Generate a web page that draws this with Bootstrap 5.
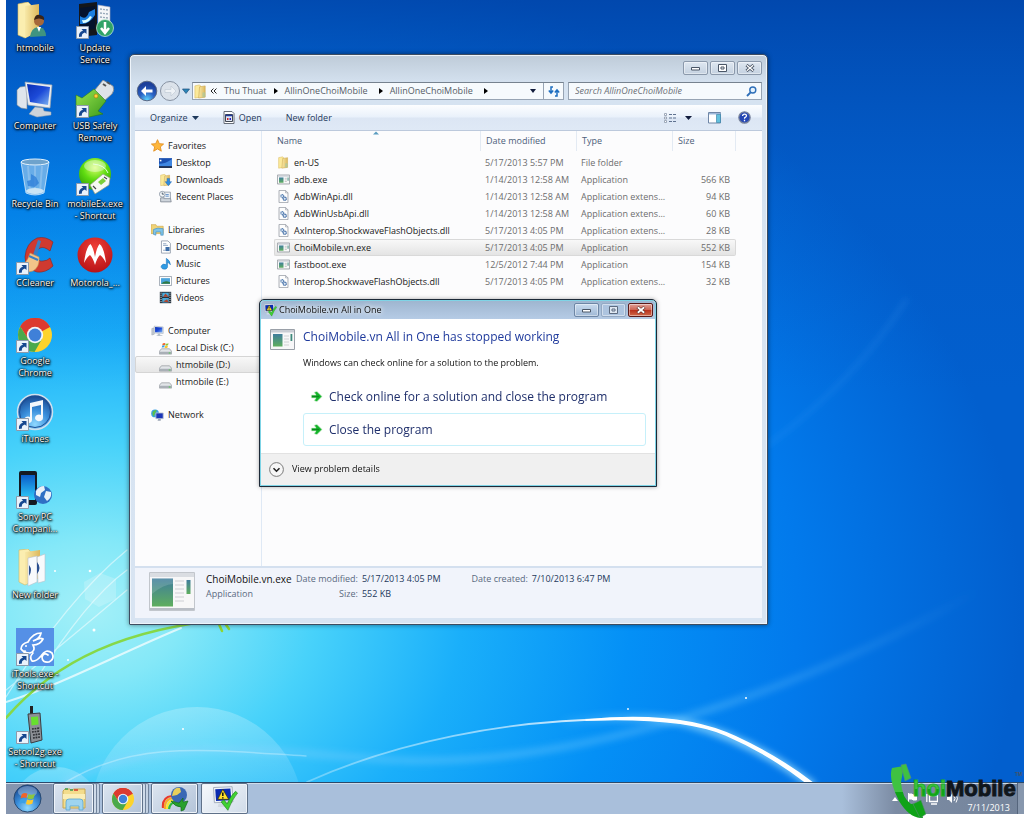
<!DOCTYPE html>
<html lang="en">
<head>
<meta charset="utf-8">
<meta name="viewport" content="width=device-width, initial-scale=1">
<title>Desktop</title>
<link href="https://cdn.jsdelivr.net/npm/bootstrap@5.3.0/dist/css/bootstrap.min.css" rel="stylesheet">
<style>
body{font:9px/12px "Open Sans",sans-serif;color:#1a1a1a;background:#fff;overflow:hidden}
button,input{font:inherit;color:inherit;border:0;background:none;padding:0}
a{color:inherit;text-decoration:none}
svg{display:block;flex:none}
.screen{padding:0 0 5px 6px}
.desk{min-height:0}
.wallpaper{position:absolute;inset:0;width:100%;height:100%}
.shortcuts{position:relative;display:grid;grid-auto-flow:column;grid-template-rows:repeat(10,1fr);grid-template-columns:60px 60px;width:120px;height:100%;margin-left:-1px}
.shortcut{display:flex;flex-direction:column;align-items:center;padding-top:2px;min-height:0;color:#fff;text-align:center;white-space:nowrap;text-shadow:0 0 1px #000,0 0 2px #000,1px 1px 2px #000,0 1px 3px #000}
.ico{width:40px;height:40px}
.win{position:absolute;border:1px solid #3d4c60;border-radius:5px 5px 1px 1px}
.explorer{top:54px;left:123px;right:256px;bottom:157px;padding:0 5px 6px;background:linear-gradient(#becbd8,#d6e3f1 30px,#d8e4f2);box-shadow:inset 0 0 0 1px #eef4fa,0 0 5px #0007}
.caps{height:27px;padding-top:6px;gap:2px}
.cap{width:25px;height:14px;border:1px solid #8b99ab;border-radius:2px;background:linear-gradient(#dfe8f1,#c4d1e0);box-shadow:inset 0 0 0 1px #ffffff70;display:flex;align-items:center;justify-content:center}
.addressrow{height:18px}
.navs{width:57px}
.field{height:18px;border:1px solid #97a4b4;border-top-color:#76828f;background:#f6fafd}
.crumbs{gap:7px;color:#555c66}
.crumbs .up{margin-left:-5px}
.crumbs .sep{border-left:1px solid #97a4b4;height:16px;width:20px}
.search{width:194px;padding:0 4px 0 6px}
.search input{outline:0;min-width:0}
.search input::placeholder{color:#6c7178;font-style:italic;opacity:1}
.tools{height:26px;margin-top:5px;padding:0 11px 0 15px;color:#1e395b;background:linear-gradient(#fdfeff,#e9f1fb 48%,#dce6f4 52%,#dfe9f6);border-bottom:1px solid #bcc9dc}
.panes{background:#fcfcfd;min-height:0}
.tree{width:127px;padding:6px 0 0;border-right:1px solid #dfe9f5}
.tree ul{margin:0 0 16px;padding:0;list-style:none}
.tree a{display:flex;align-items:center;gap:4px;height:17px;padding-left:23px;border:1px solid transparent}
.tree a.root{padding-left:15px}
.tree a.chosen{border-color:#d5d5d5;background:linear-gradient(#f8f8f8,#e6e6e6);border-radius:2px 0 0 2px}
.files{width:462px;margin-left:12px;table-layout:fixed;border-collapse:separate;border-spacing:0;color:#6d6d6d}
.files th{height:20px;padding:0 0 0 5px;font-weight:400;color:#4c607a;border-left:1px solid #e3eaf3}
.files th:first-child{border-left:0;padding-left:3px}
.files th:last-child{border-right:1px solid #e3eaf3}
.files thead::after{content:"";display:block;height:3px}
.files td{height:17px;padding:0 0 0 5px;line-height:15px;white-space:nowrap;border:1px solid transparent;border-width:1px 0}
.files td:first-child{color:#1a1a1a;padding-left:3px}
.files td:last-child{text-align:right;padding-right:6px}
.files .chosen td{background:linear-gradient(#f8f8f8,#e4e4e4);border-color:#d9d9d9}
.files .chosen td:first-child{border-left-width:1px;border-radius:2px 0 0 2px;padding-left:2px}
.files .chosen td:last-child{border-right-width:1px;border-radius:0 2px 2px 0;padding-right:5px}
.sortmark{position:absolute;left:111px;top:0}
.info{height:52px;padding:4px 14px;background:#f1f4fb;border-top:2px solid #d4e0ef;color:#5a6a80}
.info .facts{display:grid;grid-template-columns:86px auto auto auto auto;column-gap:4px;row-gap:3px;align-content:start;margin:1px 0 0 11px}
.info .facts>:nth-child(4){margin-left:27px}
.info .big{font-size:10px;color:#111}
.info b{font-weight:400;color:#1e395b}
.dialog{top:299px;left:253px;right:367px;border:1px solid #1d2a38;border-radius:5px 5px 0 0;background:#fff;box-shadow:inset 0 0 0 1px #7fd4e6;padding:1px;color:#111;filter:drop-shadow(0 0 2px #0005)}
.titlebar{height:18px;padding:0 2px 0 2px;border-radius:3px 3px 0 0;background:linear-gradient(#9fb6d0,#b5cbe5);gap:2px}
.titlebar .cap{border-color:#6d86a5;background:linear-gradient(#c9dbee,#9fb8d5)}
.titlebar .cap.off{border-color:#93a9c4;background:#adc4df}
.titlebar .cap.shut{border-color:#5b1a19;background:linear-gradient(#e0a198,#cd6553 48%,#b8301c 52%,#cf6a4a)}
.titlebar .name{text-shadow:0 0 4px #fff,0 0 6px #fff}
.dlgbody{padding:8px 9px 7px 9px}
.dlgbody h1{font-size:12px;line-height:20px;color:#1f3a9c;margin:0}
.dlgbody p{margin:10px 0 11px}
.choice{display:flex;align-items:center;gap:6px;width:100%;height:33px;padding-left:6px;border:1px solid transparent;border-radius:3px;font-size:12px;color:#1f2f6b}
.choice.ring{border-color:#c6f0fa}
.dlgfoot{height:32px;background:#f0f0f0;border-top:1px solid #e2e2e2;padding:0 0 1px 8px}
.taskbar{height:32px;position:relative;border-top:1px solid #2b4a6b;background:linear-gradient(90deg,#8595af 0,#8595af 46px,#a9bfdb 48px,#a9bfdb calc(100% - 182px),#7b8ba3 calc(100% - 128px),#74849b);box-shadow:inset 0 1px 0 #cfdcea}
.orb{width:42px;margin-right:5px;display:flex;justify-content:center;align-items:center}
.task{width:44px;height:31px;border:1px solid #5f7189;border-radius:2px;background:linear-gradient(135deg,#dce5f0,#b3c3d8);box-shadow:inset 0 0 0 1px #eef3f9;display:flex;align-items:center;justify-content:center}
.task.stack{width:41px;box-shadow:inset 0 0 0 1px #eef3f9,3px 0 0 -1px #cfdbe9,3px 0 0 0 #71839b,6px 0 0 -1px #c4d2e3,6px 0 0 0 #71839b;margin-right:8px}
.task.open{width:47px;margin-right:3px}
.task.live{background:linear-gradient(135deg,#f6f9fc,#d0dbe9)}
.tray{color:#fff;gap:9px;padding-right:7px}
.peek{width:7px;border-left:1px solid #55657c;background:#8797ad}
.brand{position:absolute;right:0;bottom:-4px;width:136px;height:56px}
.brand text{font-family:"Liberation Sans",sans-serif;font-weight:700}
</style>
</head>
<body>
<svg width="0" height="0" class="position-absolute" aria-hidden="true">
<defs>
<linearGradient id="gFold" x1="0" y1="0" x2="1" y2="0"><stop offset="0" stop-color="#f8e9a8"/><stop offset="1" stop-color="#dcb85c"/></linearGradient>
<linearGradient id="gApp" x1="0" y1="0" x2="0" y2="1"><stop offset="0" stop-color="#3f7d9c"/><stop offset="1" stop-color="#5fae5e"/></linearGradient>
<linearGradient id="gScr" x1="0" y1="0" x2="1" y2="1"><stop offset="0" stop-color="#0a2fb4"/><stop offset=".5" stop-color="#1c4ad8"/><stop offset="1" stop-color="#7db4f2"/></linearGradient>
<linearGradient id="gPhone" x1="0" y1="0" x2="0" y2="1"><stop offset="0" stop-color="#0a5cc8"/><stop offset="1" stop-color="#2fd0fb"/></linearGradient>
<radialGradient id="gGreen" cx=".5" cy=".3" r=".75"><stop offset="0" stop-color="#d8ff6a"/><stop offset=".5" stop-color="#5fdc10"/><stop offset="1" stop-color="#2f9a08"/></radialGradient>
<radialGradient id="gBlue" cx=".5" cy=".85" r=".8"><stop offset="0" stop-color="#8fd8ff"/><stop offset=".5" stop-color="#3a8fdc"/><stop offset="1" stop-color="#1a4a92"/></radialGradient>
<radialGradient id="gBack" cx=".5" cy=".95" r=".8"><stop offset="0" stop-color="#5ed4ff"/><stop offset=".5" stop-color="#2a62c4"/><stop offset="1" stop-color="#1c3f9a"/></radialGradient>
<radialGradient id="gRed" cx=".5" cy=".3" r=".8"><stop offset="0" stop-color="#f04038"/><stop offset="1" stop-color="#b00c12"/></radialGradient>
<linearGradient id="gUsb" x1="0" y1="0" x2="1" y2="1"><stop offset="0" stop-color="#9be650"/><stop offset="1" stop-color="#3b9a1c"/></linearGradient>
<symbol id="lnk" viewBox="0 0 13 13"><path d="M.5.5h12v12H.5z" fill="#eaf2fb" stroke="#8c9aab"/><path d="M3 11C2.500 7.500 4 5.500 7 4.700L5.500 3h5v5L8.900 6.600C6.500 7.400 5.500 8.800 6 10.500z" fill="#16478f"/></symbol>
<symbol id="folder" viewBox="0 0 16 16"><path d="M2 2l5-1 1 1v12l-6 1z" fill="#fbe99a" stroke="#d9b95a" stroke-width=".6"/><path d="M7 3l6-1v12l-7 1z" fill="url(#gFold)" stroke="#c9a44a" stroke-width=".6"/><path d="M10 9h3v5h-3z" fill="#a9c9a0" opacity=".7"/></symbol>
<symbol id="exe" viewBox="0 0 16 14"><path d="M.5 1.500h15v11H.5z" fill="#fafafa" stroke="#8d9299"/><path d="M1 2h14v1.500H1z" fill="#c9ced6"/><path d="M2.500 4.500h5.500v6.500H2.500z" fill="url(#gApp)"/><path d="M9.500 5.500h2.500m-2.500 2h2.500m-2.500 2h2.500" stroke="#bbb"/><path d="M13 4.500h1.200v4H13z" fill="#3f8a7c"/></symbol>
<symbol id="dll" viewBox="0 0 14 16"><path d="M1.500.5h8l3 3v12h-11z" fill="#fdfdfd" stroke="#979ca5"/><path d="M9.500.5v3h3" fill="none" stroke="#979ca5" stroke-width=".8"/><circle cx="5.500" cy="7.500" r="1.800" fill="#dfe9f5" stroke="#5b83b5" stroke-width="1.500" stroke-dasharray="1.400 .4"/><circle cx="8.500" cy="10.800" r="2" fill="#dfe9f5" stroke="#4b74aa" stroke-width="1.600" stroke-dasharray="1.400 .4"/></symbol>
<symbol id="pc" viewBox="0 0 16 16"><path d="M1 5l3-1v8l-3 1z" fill="#c5ccd4" stroke="#8b95a1" stroke-width=".5"/><path d="M4 2l11 1v8l-11-.5z" fill="#e8ebef" stroke="#98a3b0" stroke-width=".6"/><path d="M5 3l9 .8v6l-9-.3z" fill="url(#gScr)"/><path d="M8 11l3 .2.500 2H14v1H7v-1h1.500z" fill="#b8c1cb"/></symbol>
<symbol id="drive" viewBox="0 0 16 16"><path d="M3 7h10l2.500 3v3.500H.5V10z" fill="#e2e5e8" stroke="#8a8f96" stroke-width=".8"/><path d="M1 10.500h14.500v3H1z" fill="#a9afb6"/><path d="M12 11.500h2v1.200h-2z" fill="#4ed04a"/></symbol>
<symbol id="flag4" viewBox="0 0 20 20"><path d="M3 5q3-2.500 6.500-.8L8.300 9Q5 7.600 1.900 9.600z" fill="#f0642a"/><path d="M10.500 4.700q3.500 1.600 7-.3L16.200 9.300q-3.600 1.800-7 .2z" fill="#8cc63f"/><path d="M1.700 10.500q3.300-2 6.400-.5L6.900 15Q3.700 13.500.5 15.400z" fill="#3aa0e8"/><path d="M9 10.500q3.600 1.600 7-.2l-1.300 5q-3.500 1.700-6.900.2z" fill="#fdc82f"/></symbol>
<symbol id="chrome" viewBox="0 0 40 40"><circle cx="20" cy="20" r="17" fill="#fdd32c"/><path d="M20 20L5.300 11.500A17 17 0 0 1 34.700 11.500L35 12z" fill="#dc3b30"/><path d="M20 12h14.900A17 17 0 0 0 5.300 11.500L13 24z" fill="#dc3b30"/><path d="M5.300 11.500A17 17 0 0 0 19.500 37L27 24 13.100 24z" fill="#4aa94c"/><circle cx="20" cy="20" r="8.200" fill="#f4f6f8"/><circle cx="20" cy="20" r="6.400" fill="#3f80d8"/></symbol>
<symbol id="shield" viewBox="0 0 32 32"><path d="M3 3l22-1 1 18L4 21z" fill="#f1f4f8" stroke="#9aa5b4"/><path d="M5 5l18-1 1 14-18 1z" fill="#0b2bb0"/><path d="M14 5l7 12H8z" fill="#ffe02e" stroke="#302800" stroke-width=".8"/><path d="M14 9v4m0 1.500v1.400" stroke="#111" stroke-width="1.800"/><path d="M9 22h11l3 4H8z" fill="#d2d9e2"/><path d="M12 20l3.500-2.500 3.500 5Q23 13 29 7.500l2.500 2Q25 17 20 30z" fill="#3fd232" stroke="#1d7a18" stroke-width=".7"/></symbol>
<symbol id="go" viewBox="0 0 14 14"><path d="M1.500 5.500h5L4.500 2.500 7.500 1.500 13 7l-5.500 5.500-3-1L6.500 8.500h-5z" fill="#14b52a" stroke="#cfeccd" stroke-width=".8"/><path d="M2 7h8" stroke="#0a8a1c" stroke-width="1.600"/></symbol>
</defs>
</svg>

<div class="screen vh-100 d-flex flex-column">
<main class="desk position-relative flex-grow-1">
<svg class="wallpaper" viewBox="0 0 1018 782" preserveAspectRatio="none" aria-hidden="true">
<defs>
<radialGradient id="sky" gradientUnits="userSpaceOnUse" cx="0" cy="0" r="1" gradientTransform="translate(85 610) scale(930 690)"><stop offset="0" stop-color="#a4f0f8"/><stop offset=".1" stop-color="#84e8f8"/><stop offset=".24" stop-color="#48d2fa"/><stop offset=".4" stop-color="#1aaffa"/><stop offset=".58" stop-color="#0490f6"/><stop offset=".76" stop-color="#027aec"/><stop offset="1" stop-color="#025fce"/></radialGradient>
<linearGradient id="top" x1="0" y1="0" x2="0" y2="1"><stop offset="0" stop-color="#003ea0" stop-opacity=".7"/><stop offset=".25" stop-color="#0452b8" stop-opacity=".25"/><stop offset=".5" stop-color="#0452b8" stop-opacity="0"/></linearGradient>
<linearGradient id="arc" gradientUnits="userSpaceOnUse" x1="300" y1="0" x2="640" y2="0"><stop offset="0" stop-color="#fff" stop-opacity=".3"/><stop offset=".6" stop-color="#fff" stop-opacity=".6"/><stop offset="1" stop-color="#fff"/></linearGradient>
<linearGradient id="wave" gradientUnits="userSpaceOnUse" x1="60" y1="0" x2="974" y2="0"><stop offset="0" stop-color="#7fd0ff" stop-opacity=".35"/><stop offset=".7" stop-color="#7fd0ff" stop-opacity=".3"/><stop offset="1" stop-color="#7fd0ff" stop-opacity="0"/></linearGradient>
<linearGradient id="halo" gradientUnits="userSpaceOnUse" x1="540" y1="0" x2="720" y2="0"><stop offset="0" stop-color="#9fe0ff" stop-opacity="0"/><stop offset="1" stop-color="#9fe0ff" stop-opacity=".7"/></linearGradient>
<filter id="soft" x="-10%" y="-20%" width="120%" height="140%"><feGaussianBlur stdDeviation="3"/></filter>
<linearGradient id="bub" x1="0" y1="0" x2="0" y2="1"><stop offset="0" stop-color="#fff" stop-opacity=".24"/><stop offset=".5" stop-color="#fff" stop-opacity=".05"/></linearGradient>
</defs>
<path fill="url(#sky)" d="M0 0h1018v782H0z"/><path fill="url(#top)" d="M0 0h1018v782H0z"/>
<g fill="none" stroke-linecap="round">
<path d="M60 782C150 735 240 750 386 760 560 768 780 700 974 590" stroke="url(#wave)" stroke-width="8" filter="url(#soft)"/>
<path d="M60 782C130 740 200 750 300 756" stroke="#fff" stroke-opacity=".3" stroke-width="1.500"/>
<path d="M560 722C600 717 650 716 680 723 730 735 770 758 805 784" stroke="url(#halo)" stroke-width="9" filter="url(#soft)"/>
<path d="M301 782C390 742 500 720 610 719" stroke="url(#arc)" stroke-width="1.800"/>
<path d="M580 720C640 714 690 718 730 737 760 751 785 766 808 784L802 784C775 763 750 748 720 735 690 722 640 718 580 720z" fill="#fff" stroke="#fff" stroke-width="1.500" stroke-linejoin="round"/>
<path d="M0 690Q50 650 121 590M0 697Q60 600 121 550M30 680Q80 600 121 570" stroke="#fff" stroke-opacity=".5" stroke-width="1.300"/>
<path d="M0 702C55 685 110 655 175 628" stroke="#fff" stroke-opacity=".7" stroke-width="2"/>
<path d="M0 718C50 660 120 628 225 619" stroke="#86d848" stroke-width="2.500"/>
<path d="M212 622l4 9m2-9l5 7" stroke="#8fd62f" stroke-width="2.500"/>
<path d="M762 445Q850 380 900 300" stroke="#5ab4ff" stroke-opacity=".16" stroke-width="4" filter="url(#soft)"/>
</g>
<circle cx="191" cy="813" r="106" fill="url(#bub)"/><circle cx="50" cy="812" r="45" fill="url(#bub)"/>
<path d="M78 582l16-9 16 6v20l-17 8-14-8z" fill="#fff" opacity=".2"/>
<g fill="#fff"><circle cx="84" cy="571" r="1.300"/><circle cx="88" cy="630" r="1.500"/><circle cx="49" cy="571" r="1"/><circle cx="62" cy="660" r="1"/><circle cx="740" cy="698" r="1"/><circle cx="622" cy="709" r=".9"/><circle cx="177" cy="729" r="1"/></g>
</svg>

<nav class="shortcuts" aria-label="Desktop shortcuts">
<a class="shortcut" href="#"><svg class="ico" viewBox="0 0 40 40"><path d="M3 2l10-2 3 3v30l-6 3-7-3z" fill="#fbeeb0" stroke="#d7b75c" stroke-width=".6"/><path d="M10 4l14-2v27l-14 7z" fill="url(#gFold)"/><circle cx="24" cy="19" r="5" fill="#a5683a"/><path d="M19 18q1-6 6-5 5 1 4 5-5-3-10 0z" fill="#3a2416"/><path d="M15 35q1-9 8-10h2q6 2 6 9z" fill="#3f9480"/><path d="M22 25l2 5 2-5z" fill="#fff"/></svg>htmobile</a>
<a class="shortcut" href="#"><svg class="ico" viewBox="0 0 40 40"><path d="M2 10l3-3 7-1v23l-6-1-4-3z" fill="#dfe5ec" stroke="#7c8894" stroke-width=".6"/><path d="M10 2l27 3-2 23-22-3z" fill="#e9edf1" stroke="#99a4b0" stroke-width=".7"/><path d="M12 4l23 3-2 18-18-3z" fill="url(#gScr)"/><path d="M20 27l8 1 1 3 7 1v3l-14 2-8-3z" fill="#cdd3da" stroke="#98a3ae" stroke-width=".5"/></svg>Computer</a>
<a class="shortcut" href="#"><svg class="ico" viewBox="0 0 40 40"><path d="M6 4h28l-5 31q-9 4-18 0z" fill="#bcd8ee" fill-opacity=".55" stroke="#e9f6ff" stroke-opacity=".7"/><ellipse cx="20" cy="4" rx="14" ry="3" fill="#6fa3cc" stroke="#e4f2fc"/><path d="M13 8l2 26M27 8l-2 26M20 8v28" stroke="#fff" stroke-opacity=".2" stroke-width="2"/><path d="M16 16l5 3 3 6-4 4-7-1-1-5 4-1z" fill="#2f7fd8" opacity=".8"/><ellipse cx="20" cy="33" rx="9" ry="3" fill="#c9e4f5"/></svg>Recycle Bin</a>
<a class="shortcut" href="#"><svg class="ico" viewBox="0 0 40 40"><path d="M38 5l-3 9q-6-5-10-3-5 3-4 8 2 6 7 5 4 0 7-3l3 8q-7 7-16 6-12-3-12-15Q11 6 22 1q9-2 16 4z" fill="#cf3a30" stroke="#8e211c" stroke-width=".6"/><path d="M23 3l3 1-4 15-4-1z" fill="#3a80c4"/><path d="M15 16l9 4q1 10-6 14-10 3-15-3 9-4 12-15z" fill="#f2c58a" stroke="#c98d4d" stroke-width=".6"/><path d="M14 19l9 4" stroke="#3a80c4" stroke-width="2"/><use href="#lnk" x="1" y="25" width="13" height="13"/></svg>CCleaner</a>
<a class="shortcut" href="#"><svg class="ico" viewBox="0 0 40 40"><use href="#chrome" width="40" height="40"/><use href="#lnk" x="1" y="25" width="13" height="13"/></svg>Google<br>Chrome</a>
<a class="shortcut" href="#"><svg class="ico" viewBox="0 0 40 40"><circle cx="20" cy="19" r="17.500" fill="url(#gBlue)" stroke="#cfe0ee" stroke-width="1.500"/><circle cx="20" cy="19" r="15.500" fill="none" stroke="#1d4e94"/><path d="M15 10l13-3v18a4 3.400 0 1 1-2-3V12l-9 2v13a4 3.400 0 1 1-2-3z" fill="#f4f8fc"/><use href="#lnk" x="1" y="25" width="13" height="13"/></svg>iTunes</a>
<a class="shortcut" href="#"><svg class="ico" viewBox="0 0 40 40"><rect x="4" y="0" width="18" height="34" rx="2" fill="#141a22"/><path d="M6 4h14v25H6z" fill="url(#gPhone)"/><circle cx="28" cy="24" r="9" fill="#2f6fc4"/><path d="M21 20q3-5 8-5l1 4-4 3-1 4-4-2zM31 20l5 1q1 6-4 9l-3-4z" fill="#e9f1f8"/><use href="#lnk" x="1" y="25" width="13" height="13"/></svg>Sony PC<br>Compani...</a>
<a class="shortcut" href="#"><svg class="ico" viewBox="0 0 40 40"><path d="M4 1l9-1 3 3v30l-6 3-6-3z" fill="#fbeeb0" stroke="#d7b75c" stroke-width=".6"/><path d="M10 3l15-2v28l-15 6z" fill="url(#gFold)"/><path d="M13 9l9-2v26l-9 4zM22 8l8-3v27l-7 2z" fill="#f8fafc" stroke="#b9c1ca" stroke-width=".6"/><path d="M14 16q4 5 0 11zM22 13q5 6 0 12z" fill="#2a4f8f"/></svg>New folder</a>
<a class="shortcut" href="#"><svg class="ico" viewBox="0 0 40 40"><path d="M1 0h38v38H1z" fill="#5590e6"/><g fill="none" stroke="#fff" stroke-width="1.700" stroke-linecap="round"><path d="M13 14q5-9 13-9-1 6-8 8 7-4 10-2-3 6-10 6 3 6-3 8-6 0-9-4 0-5 7-7M10 23q-3 5 1 8M18 25q-4 4-1 8 4 1 9-5 5-8 11-3 3 6-3 9-7 1-7-5 2-5 6-2"/></g><circle cx="11" cy="18" r="1" fill="#fff"/><use href="#lnk" x="1" y="25" width="13" height="13"/></svg>iTools.exe -<br>Shortcut</a>
<a class="shortcut" href="#"><svg class="ico" viewBox="0 0 40 40"><path d="M15 0h3v9h-3z" fill="#222"/><path d="M13 8l12-1 2 27-11 3z" fill="#8d9096" stroke="#3a3c40"/><path d="M16 11l7-.5.5 8-7 1z" fill="#67e02e"/><path d="M17 23l8-1M17 26l8-1M18 29l7-1M18 32l7-1" stroke="#2c2e33" stroke-width="1.600" stroke-dasharray="1.800 .8"/><use href="#lnk" x="1" y="25" width="13" height="13"/></svg>Setool2g.exe<br>- Shortcut</a>
<a class="shortcut" href="#"><svg class="ico" viewBox="0 0 40 40"><path d="M4 2l18-2v33l-18 2z" fill="#14161a"/><path d="M5 6l15-2v23l-15 2z" fill="#04122c"/><path d="M5 14q6 5 9-4l6-3v6q-6 10-15 9z" fill="#1b7fe0"/><path d="M7 18q5 1 8-4l2 1q-3 6-9 6z" fill="#dff"/><path d="M23 3l12 2v22l-12-2z" fill="#f4f6f8" stroke="#aab" stroke-width=".6"/><path d="M25 7l8 1M25 11l8 1M25 15l8 1" stroke="#9ab" stroke-width="1.500" stroke-dasharray="2 1"/><circle cx="30" cy="26" r="8.500" fill="#2fa368" stroke="#d6f3e2" stroke-width=".7"/><path d="M30 20v10m-4-4l4 5 4-5" fill="none" stroke="#fff" stroke-width="2.500"/><use href="#lnk" x="1" y="24" width="13" height="13"/></svg>Update<br>Service</a>
<a class="shortcut" href="#"><svg class="ico" viewBox="0 0 40 40"><path d="M19 11l9-11 10 6q2 4-1 8l-9 8z" fill="#dfe3e8" stroke="#7c838c" stroke-width=".8"/><path d="M28 4l3 2m1-4l3 2" stroke="#555" stroke-width="2"/><path d="M1 15l6 3 12-9 12 12-8 10 5 3-14 3H1z" fill="url(#gUsb)" stroke="#2c7a14" stroke-width=".6"/><circle cx="21" cy="16" r="2" fill="#ffd23a" stroke="#a9720c" stroke-width=".6"/><use href="#lnk" x="1" y="25" width="13" height="13"/></svg>USB Safely<br>Remove</a>
<a class="shortcut" href="#"><svg class="ico" viewBox="0 0 40 40"><circle cx="20" cy="16" r="16" fill="url(#gGreen)"/><ellipse cx="20" cy="8" rx="11" ry="6" fill="#fff" opacity=".4"/><path d="M18 6q12 1 15 9" fill="none" stroke="#e8ffe0"/><path d="M15 27l13-11 7 4-1 7-14 9z" fill="#f7f9f4" stroke="#8c9a80" stroke-width=".7"/><path d="M23 24l5-4 3 3-5 4z" fill="#7ccf3a"/><path d="M18 28l3 3m8-12l3 2" stroke="#444" stroke-width="1.200"/><use href="#lnk" x="1" y="25" width="13" height="13"/></svg>mobileEx.exe<br>- Shortcut</a>
<a class="shortcut" href="#"><svg class="ico" viewBox="0 0 40 40"><circle cx="20" cy="18" r="17.500" fill="url(#gRed)"/><path d="M9 26Q11 10 15.500 7q3 4 4.500 13 1.500-9 4.500-13Q29 10 31 26q-3-6-6-8-3 3-5 10-2-7-5-10-3 2-6 8z" fill="#fff"/></svg>Motorola_...</a>
</nav>

<section class="win explorer d-flex flex-column" aria-label="AllinOneChoiMobile">
<div class="caps d-flex justify-content-end">
<button class="cap" aria-label="Minimize"><svg width="10" height="6" viewBox="0 0 10 6"><path d="M.5 2.500h8v2.500h-8z" fill="#fff" stroke="#4a5666"/></svg></button>
<button class="cap" aria-label="Maximize"><svg width="9" height="8" viewBox="0 0 9 8"><path d="M.5.5h8v7h-8zM3 3h3v2H3z" fill="#fff" stroke="#4a5666"/></svg></button>
<button class="cap" aria-label="Close"><svg width="10" height="8" viewBox="0 0 10 8"><path d="M1.500 1l7 6m0-6l-7 6" stroke="#4a5666" stroke-width="3"/><path d="M1.800 1.300l6.400 5.400m0-5.400l-6.400 5.400" stroke="#fff" stroke-width="1.300"/></svg></button>
</div>
<div class="addressrow d-flex align-items-center">
<div class="navs d-flex align-items-center flex-shrink-0">
<button aria-label="Back"><svg width="23" height="22" viewBox="0 0 23 22"><circle cx="12" cy="11" r="9.800" fill="url(#gBack)" stroke="#5b6a86"/><path d="M11 6l-5 5 5 5v-3.500h6.500v-3H11z" fill="#fff"/></svg></button>
<button aria-label="Forward"><svg width="23" height="22" viewBox="0 0 23 22"><circle cx="12" cy="11" r="9.500" fill="#dbe2ea" stroke="#8792a2"/><path d="M13 6l5 5-5 5v-3.500H7v-3h6z" fill="#eef2f6" stroke="#bcc6d2" stroke-width=".6"/></svg></button>
<button aria-label="Recent locations"><svg width="11" height="8" viewBox="0 0 11 8"><path d="M1.500 2h7L5 6.500z" fill="#2a86b8" stroke="#1d4f7c" stroke-width=".7"/></svg></button>
</div>
<div class="field crumbs d-flex align-items-center flex-grow-1">
<svg width="15" height="15" viewBox="0 0 16 16"><use href="#folder"/></svg>
<button class="up" aria-label="Earlier folders"><svg width="7" height="6" viewBox="0 0 7 6"><path d="M3.500.5L1 3l2.500 2.500M6.500.5L4 3l2.500 2.500" fill="none" stroke="#222"/></svg></button>
<a href="#">Thu Thuat</a><svg width="4" height="6"><path d="M0 0l4 3-4 3z"/></svg>
<a href="#">AllinOneChoiMobile</a><svg class="ms-1" width="4" height="6"><path d="M0 0l4 3-4 3z"/></svg>
<a href="#">AllinOneChoiMobile</a><svg class="ms-1" width="4" height="6"><path d="M0 0l4 3-4 3z"/></svg>
<button class="ms-auto me-n1" aria-label="Previous locations"><svg width="7" height="4"><path d="M1 0h6L4 4z" fill="#111c3c"/></svg></button>
<button class="sep d-flex align-items-center justify-content-center" aria-label="Refresh"><svg width="12" height="11" viewBox="0 0 12 11"><path d="M5 1H3v5M.800 4.500L3 7l2.200-2.500M7 10h2V5M6.800 6.500L9 4l2.200 2.500" fill="none" stroke="#1f6fc0" stroke-width="1.500"/></svg></button>
</div>
<div class="field search d-flex align-items-center ms-1 flex-shrink-0">
<input class="flex-grow-1" type="text" placeholder="Search AllinOneChoiMobile" aria-label="Search AllinOneChoiMobile">
<svg width="11" height="11" viewBox="0 0 11 11"><circle cx="6.800" cy="4" r="3" fill="#e4f2fd" stroke="#2e6fb8" stroke-width="1.400"/><path d="M4.600 6.300L1 10" stroke="#2e6fb8" stroke-width="1.900"/></svg>
</div>
</div>
<div class="tools d-flex align-items-center">
<button class="d-flex align-items-center gap-1">Organize <svg width="7" height="4"><path d="M0 0h7L3.500 4z" fill="#1e395b"/></svg></button>
<button class="d-flex align-items-center gap-1 ms-4"><svg width="12" height="13" viewBox="0 0 12 13"><path d="M1 .5h8l2 2v10H1z" fill="#fff" stroke="#666d78"/><path d="M2.500 3.500h7v7h-7z" fill="#dfe6f3" stroke="#3f4652"/><path d="M2.500 4.500h7" stroke="#223a9c" stroke-width="1.500"/><path d="M4 8h1.500" stroke="#c22" stroke-width="2"/><path d="M6.500 8H8" stroke="#22c" stroke-width="2"/></svg>Open</button>
<button class="ms-4">New folder</button>
<button class="d-flex align-items-center gap-2 ms-auto" aria-label="Change your view"><svg width="13" height="10" viewBox="0 0 13 10"><path d="M.5.500h2v2h-2zm0 3.500h2v2h-2zm0 3.500h2v2h-2z" fill="#fff" stroke="#8a97aa" stroke-width=".8"/><path d="M5 1.500h8M5 5h8M5 8.500h8" stroke="#5f7290" stroke-dasharray="3 1"/></svg><svg width="7" height="4"><path d="M0 0h7L3.500 4z" fill="#111c3c"/></svg></button>
<button class="ms-3" aria-label="Preview pane"><svg width="14" height="12" viewBox="0 0 14 12"><path d="M.5.500h12v10.500H.5z" fill="#fff" stroke="#6f86a6"/><path d="M1 1h11.500v1.500H1z" fill="#9db8da"/><path d="M8.500 2.500h4v8h-4z" fill="#62c0dd" stroke="#3f88ad" stroke-width=".7"/></svg></button>
<button class="ms-3" aria-label="Help"><svg width="13" height="13" viewBox="0 0 13 13"><circle cx="6.500" cy="6.500" r="5.700" fill="#2547b4" stroke="#7d879c" stroke-width="1.200"/><path d="M4.600 5q0-1.900 2-1.900 1.900 0 1.900 1.700 0 1-1.900 2v1M6.500 8.800v1.400" fill="none" stroke="#fff" stroke-width="1.300"/></svg></button>
</div>
<div class="panes d-flex flex-grow-1">
<nav class="tree flex-shrink-0" aria-label="Folders">
<ul>
<li><a class="root" href="#"><svg width="13" height="13" viewBox="0 0 16 16"><path d="M8 .800l2.200 4.900 5.300.5-4 3.500 1.200 5.300L8 12.200 3.300 15l1.200-5.300-4-3.500 5.300-.5z" fill="#fdb63c" stroke="#e08a1a"/></svg>Favorites</a></li>
<li><a href="#"><svg width="13" height="12" viewBox="0 0 16 14"><path d="M0 1h16v12H0z" fill="#1a4fb0"/><path d="M0 8q8 0 16-6v9H0z" fill="#3f86e0"/><path d="M0 11h16v2H0z" fill="#222c44"/><path d="M1 3h2v2H1z" fill="#fff"/></svg>Desktop</a></li>
<li><a href="#"><svg width="13" height="14" viewBox="0 0 16 16"><use href="#folder"/><path d="M10 6h3v4h2.500L11.500 15 7.500 10H10z" fill="#2e8be0" stroke="#1c5fae" stroke-width=".5"/></svg>Downloads</a></li>
<li><a href="#"><svg width="13" height="14" viewBox="0 0 16 16"><path d="M2 9h12l1 5H2z" fill="#cfd5dc" stroke="#7f8893"/><path d="M6 2h8v8H6z" fill="#eef3f8" stroke="#8a94a1"/><path d="M8 5h4m-4 2h4" stroke="#4a7fc0"/><circle cx="4" cy="4.500" r="3.500" fill="#f2f5f8" stroke="#8e99a6"/><path d="M4 2.500v2h2" stroke="#345" fill="none"/></svg>Recent Places</a></li>
</ul>
<ul>
<li><a class="root" href="#"><svg width="13" height="13" viewBox="0 0 16 16"><path d="M0 2h6l1 2h8v9H0z" fill="#f0d377" stroke="#c79f3c" stroke-width=".7"/><path d="M3 14V8q5-3 12-1v8h-3v-4H6v4z" fill="#7fc3e8" stroke="#3c88bb" stroke-width=".7"/></svg>Libraries</a></li>
<li><a href="#"><svg width="13" height="14" viewBox="0 0 16 16"><path d="M3 .5h8l3 3v12H3z" fill="#fff" stroke="#8b96a6"/><path d="M5 4h4M5 6h6M5 12h3" stroke="#7f96b8"/><path d="M8 8h5v5H8z" fill="#3e6ea8"/></svg>Documents</a></li>
<li><a href="#"><svg width="13" height="14" viewBox="0 0 16 16"><path d="M9 1q5 3 5 8-2-3-3.500-3v6a4 3 0 1 1-1.500-3z" fill="#2f9be4" stroke="#156bb4" stroke-width=".6"/></svg>Music</a></li>
<li><a href="#"><svg width="13" height="12" viewBox="0 0 16 14"><path d="M.5 1.500h15v11H.5z" fill="#fff" stroke="#8e99a6"/><path d="M2.500 3.500h11v7h-11z" fill="#4ba4dc"/><path d="M2.500 10.500q4-5 11-2v2z" fill="#2f7a44"/></svg>Pictures</a></li>
<li><a href="#"><svg width="13" height="13" viewBox="0 0 16 16"><path d="M1 1h14v14H1z" fill="#23303c"/><path d="M4 2h8v5H4zm0 6.500h8V14H4z" fill="#49a8d8"/><path d="M5 7l3-4 4 4zm0 6l5-3 2 4z" fill="#b0442c"/><path d="M2.500 2v12m11-12v12" stroke="#fff" stroke-dasharray="1.300 1.300"/></svg>Videos</a></li>
</ul>
<ul>
<li><a class="root" href="#"><svg width="13" height="14" viewBox="0 0 16 16"><use href="#pc"/></svg>Computer</a></li>
<li><a href="#"><svg width="13" height="14" viewBox="0 0 16 16"><use href="#drive" y="2"/><use href="#flag4" x="3" y="0" width="10" height="10"/></svg>Local Disk (C:)</a></li>
<li><a class="chosen" href="#"><svg width="13" height="14" viewBox="0 0 16 16"><use href="#drive" y="2"/></svg>htmobile (D:)</a></li>
<li><a href="#"><svg width="13" height="14" viewBox="0 0 16 16"><use href="#drive" y="2"/></svg>htmobile (E:)</a></li>
</ul>
<ul>
<li><a class="root" href="#"><svg width="13" height="14" viewBox="0 0 16 16"><circle cx="5" cy="6" r="4.800" fill="#3aa0e4"/><path d="M2 4q3-3 5-2l-2 4-2 4q-2-3-1-6z" fill="#5cc04a"/><path d="M6 5.500h9v7H6z" fill="#1b36b8" stroke="#b8c2d0"/><path d="M9 13h3v2H8z" fill="#9aa5b3"/></svg>Network</a></li>
</ul>
</nav>
<div class="flex-grow-1 position-relative overflow-hidden">
<svg class="sortmark" width="6" height="4"><path d="M0 3.500L3 .5l3 3z" fill="#5a9cc0"/></svg>
<table class="files">
<colgroup><col style="width:206px"><col style="width:96px"><col style="width:96px"><col style="width:64px"></colgroup>
<thead><tr><th>Name</th><th>Date modified</th><th>Type</th><th>Size</th></tr></thead>
<tbody id="rows"></tbody>
</table>
</div>
</div>
<footer class="info d-flex">
<svg width="46" height="39" viewBox="0 0 46 39"><path d="M.5.5h45v38H.5z" fill="#f7f7f8" stroke="#c2c6cc"/><path d="M1 1h44v4H1z" fill="#dadde2"/><path d="M1 36h44v2H1z" fill="#b9bec6"/><path d="M3 6.500h21v28H3z" fill="url(#gApp)"/><path d="M3 22q12-10 21-10V6.500H3z" fill="#fff" opacity=".15"/><path d="M26 9h9m-9 4h9m-9 4h9m-9 4h9m-9 4h9m-9 4h9" stroke="#e2e3e6" stroke-width="2"/><path d="M37.500 8h4v14h-4z" fill="url(#gApp)"/></svg>
<div class="facts">
<span class="big">ChoiMobile.vn.exe</span><span class="text-end">Date modified:</span><b>5/17/2013 4:05 PM</b><span>Date created:</span><b>7/10/2013 6:47 PM</b>
<span>Application</span><span class="text-end">Size:</span><b>552 KB</b>
</div>
</footer>
</section>

<section class="win dialog" role="dialog" aria-labelledby="dlgname">
<header class="titlebar d-flex align-items-center">
<svg width="14" height="14" viewBox="0 0 32 32"><use href="#shield"/></svg>
<span class="name flex-grow-1" id="dlgname">ChoiMobile.vn All in One</span>
<button class="cap" aria-label="Minimize"><svg width="10" height="6" viewBox="0 0 10 6"><path d="M.5 2.500h8v2.500h-8z" fill="#fff" stroke="#4a5666"/></svg></button>
<button class="cap off" aria-label="Maximize"><svg width="9" height="8" viewBox="0 0 9 8"><path d="M.5.5h8v7h-8zM3 3h3v2H3z" fill="#dfe8f2" stroke="#5c6b80"/></svg></button>
<button class="cap shut" aria-label="Close"><svg width="10" height="8" viewBox="0 0 10 8"><path d="M1.500 1l7 6m0-6l-7 6" stroke="#5a2a26" stroke-width="3"/><path d="M1.800 1.300l6.400 5.400m0-5.400l-6.400 5.400" stroke="#fff" stroke-width="1.800"/></svg></button>
</header>
<div class="dlgbody d-flex gap-2">
<svg width="25" height="23" viewBox="0 -2 25 23"><path d="M.5.5h24v20H.5z" fill="#f7f7f8" stroke="#9aa0a8"/><path d="M1 1h23v2.500H1z" fill="#c9cdd4"/><path d="M3 5h9.500v12.500H3z" fill="url(#gApp)"/><path d="M14 7h5m-5 3h5m-5 3h5m-5 3h5" stroke="#cfd1d4"/><path d="M20.500 5h1.800v7h-1.800z" fill="#3f8a7c"/></svg>
<div class="flex-grow-1">
<h1 class="fw-normal">ChoiMobile.vn All in One has stopped working</h1>
<p>Windows can check online for a solution to the problem.</p>
<button class="choice"><svg width="13" height="13"><use href="#go"/></svg>Check online for a solution and close the program</button>
<button class="choice ring"><svg width="13" height="13"><use href="#go"/></svg>Close the program</button>
</div>
</div>
<footer class="dlgfoot d-flex align-items-center">
<button class="d-flex align-items-center gap-2"><svg width="15" height="15" viewBox="0 0 15 15"><circle cx="7.500" cy="7.500" r="6.900" fill="#f6f6f6" stroke="#7b7b7b"/><path d="M4.500 6.200l3 3 3-3" fill="none" stroke="#222" stroke-width="1.600"/></svg>View problem details</button>
</footer>
</section>
</main>

<footer class="taskbar d-flex flex-shrink-0">
<button class="orb" aria-label="Start"><svg width="29" height="29" viewBox="0 0 30 30"><circle cx="15" cy="15" r="14" fill="url(#gBlue)" stroke="#28486e"/><ellipse cx="15" cy="8" rx="10" ry="6" fill="#fff" opacity=".3"/><use href="#flag4" x="6" y="6" width="19" height="19"/></svg></button>
<button class="task stack" aria-label="Windows Explorer"><svg width="28" height="26" viewBox="0 0 28 26"><path d="M3 5l2-2h5l1 1 3-1h11v19H3z" fill="#f3dc8c" stroke="#c9a850"/><path d="M5 3h3m2 1h3" stroke="#3fa050" stroke-width="1.500"/><path d="M14 4h4" stroke="#d23a2c" stroke-width="1.500"/><path d="M3 8h22v5H3z" fill="#fbeeb6"/><path d="M6 24v-8q0-3 3-3h11q3 0 3 3v8h-4v-4h-9v4z" fill="#9ed4f0" stroke="#5aa6d0" stroke-width=".8"/></svg></button>
<button class="task stack" aria-label="Google Chrome"><svg width="26" height="26"><use href="#chrome"/></svg></button>
<button class="task open" aria-label="Internet Download Manager"><svg width="28" height="26" viewBox="0 0 28 26"><g fill="none" stroke-width="2.200"><path d="M2 22Q1 11 11 10" stroke="#e83a2c"/><path d="M4 23Q3 13 12 12" stroke="#f8a82a"/><path d="M6 23Q6 15 13 14" stroke="#f8e82a"/><path d="M8 23Q9 17 14 16" stroke="#30b83a"/></g><circle cx="18" cy="9" r="8" fill="#3a68b4"/><path d="M12 6q2-5 7-4l1 4-4 3-5 1z" fill="#e9cf5a"/><path d="M10 15l8 2 4-5v4l5-1-4 9-3 1v-4q-6 0-10-6z" fill="#28a02c" stroke="#0f5f16" stroke-width=".6"/></svg></button>
<button class="task open live" aria-label="ChoiMobile.vn All in One"><svg width="27" height="27"><use href="#shield"/></svg></button>
<div class="tray d-flex align-items-center ms-auto">
<svg width="6" height="4"><path d="M0 4l3-4 3 4z" fill="#fff"/></svg>
<svg width="10" height="11" viewBox="0 0 10 11"><path d="M1.500 0v11M2 1h3l1 1h3.500v5H6L5 6H2z" fill="#fff" stroke="#fff"/></svg>
<svg width="12" height="12" viewBox="0 0 12 12"><path d="M3.500 2.500h8v6h-8zM5 11h6M.800 1v8" fill="none" stroke="#fff" stroke-width="1.300"/></svg>
<svg width="11" height="11" viewBox="0 0 11 11"><path d="M0 4h2l3-3v9L2 7H0z" fill="#fff"/><path d="M7 3q2 2.500 0 5M9 1.500q3 4 0 8" fill="none" stroke="#fff"/></svg>
<span class="align-self-end">7/11/2013</span>
</div>
<button class="peek" aria-label="Show desktop"></button>
<svg class="brand" viewBox="0 0 136 56" role="img" aria-label="ChoiMobile">
<defs><linearGradient id="gBrand" x1="0" y1="0" x2="0" y2="1"><stop offset=".5" stop-color="#3fc241"/><stop offset=".5" stop-color="#0fa317"/></linearGradient></defs>
<path d="M16 4L13 20Q14 36 23 42l8-1 4 15Q22 57 11 39 0 17 4 6z" fill="url(#gBrand)"/><path d="M13 3l5-1 5 14-6 3z M25 42l8-4 5 14-6 4z" fill="url(#gBrand)" stroke="#5c8a78" stroke-width=".6"/>
<text x="25" y="34" font-size="22" fill="url(#gBrand)" stroke="#1fae26" stroke-width="1">hoi</text><text x="58" y="34" font-size="22" fill="#10161c" stroke="#10161c" stroke-width="1">Mobile</text>
<text x="127" y="14" font-size="5" fill="#45536a">TM</text>
</svg>
</footer>
</div>

<script src="https://cdn.jsdelivr.net/npm/bootstrap@5.3.0/dist/js/bootstrap.bundle.min.js"></script>
<script>
const files = [
  ['folder', 'en-US', '5/17/2013 5:57 PM', 'File folder', ''],
  ['exe', 'adb.exe', '1/14/2013 12:58 AM', 'Application', '566 KB'],
  ['dll', 'AdbWinApi.dll', '1/14/2013 12:58 AM', 'Application extens...', '94 KB'],
  ['dll', 'AdbWinUsbApi.dll', '1/14/2013 12:58 AM', 'Application extens...', '60 KB'],
  ['dll', 'AxInterop.ShockwaveFlashObjects.dll', '5/17/2013 4:05 PM', 'Application extens...', '28 KB'],
  ['exe', 'ChoiMobile.vn.exe', '5/17/2013 4:05 PM', 'Application', '552 KB'],
  ['exe', 'fastboot.exe', '12/5/2012 7:44 PM', 'Application', '154 KB'],
  ['dll', 'Interop.ShockwaveFlashObjects.dll', '5/17/2013 4:05 PM', 'Application extens...', '32 KB']
];
document.getElementById('rows').innerHTML = files.map(([icon, name, date, type, size]) =>
  `<tr class="${name === 'ChoiMobile.vn.exe' ? 'chosen' : ''}"><td><span class="d-flex align-items-center gap-1"><svg width="13" height="13"><use href="#${icon}"/></svg>${name}</span></td><td>${date}</td><td>${type}</td><td>${size}</td></tr>`).join('');
</script>
</body>
</html>
